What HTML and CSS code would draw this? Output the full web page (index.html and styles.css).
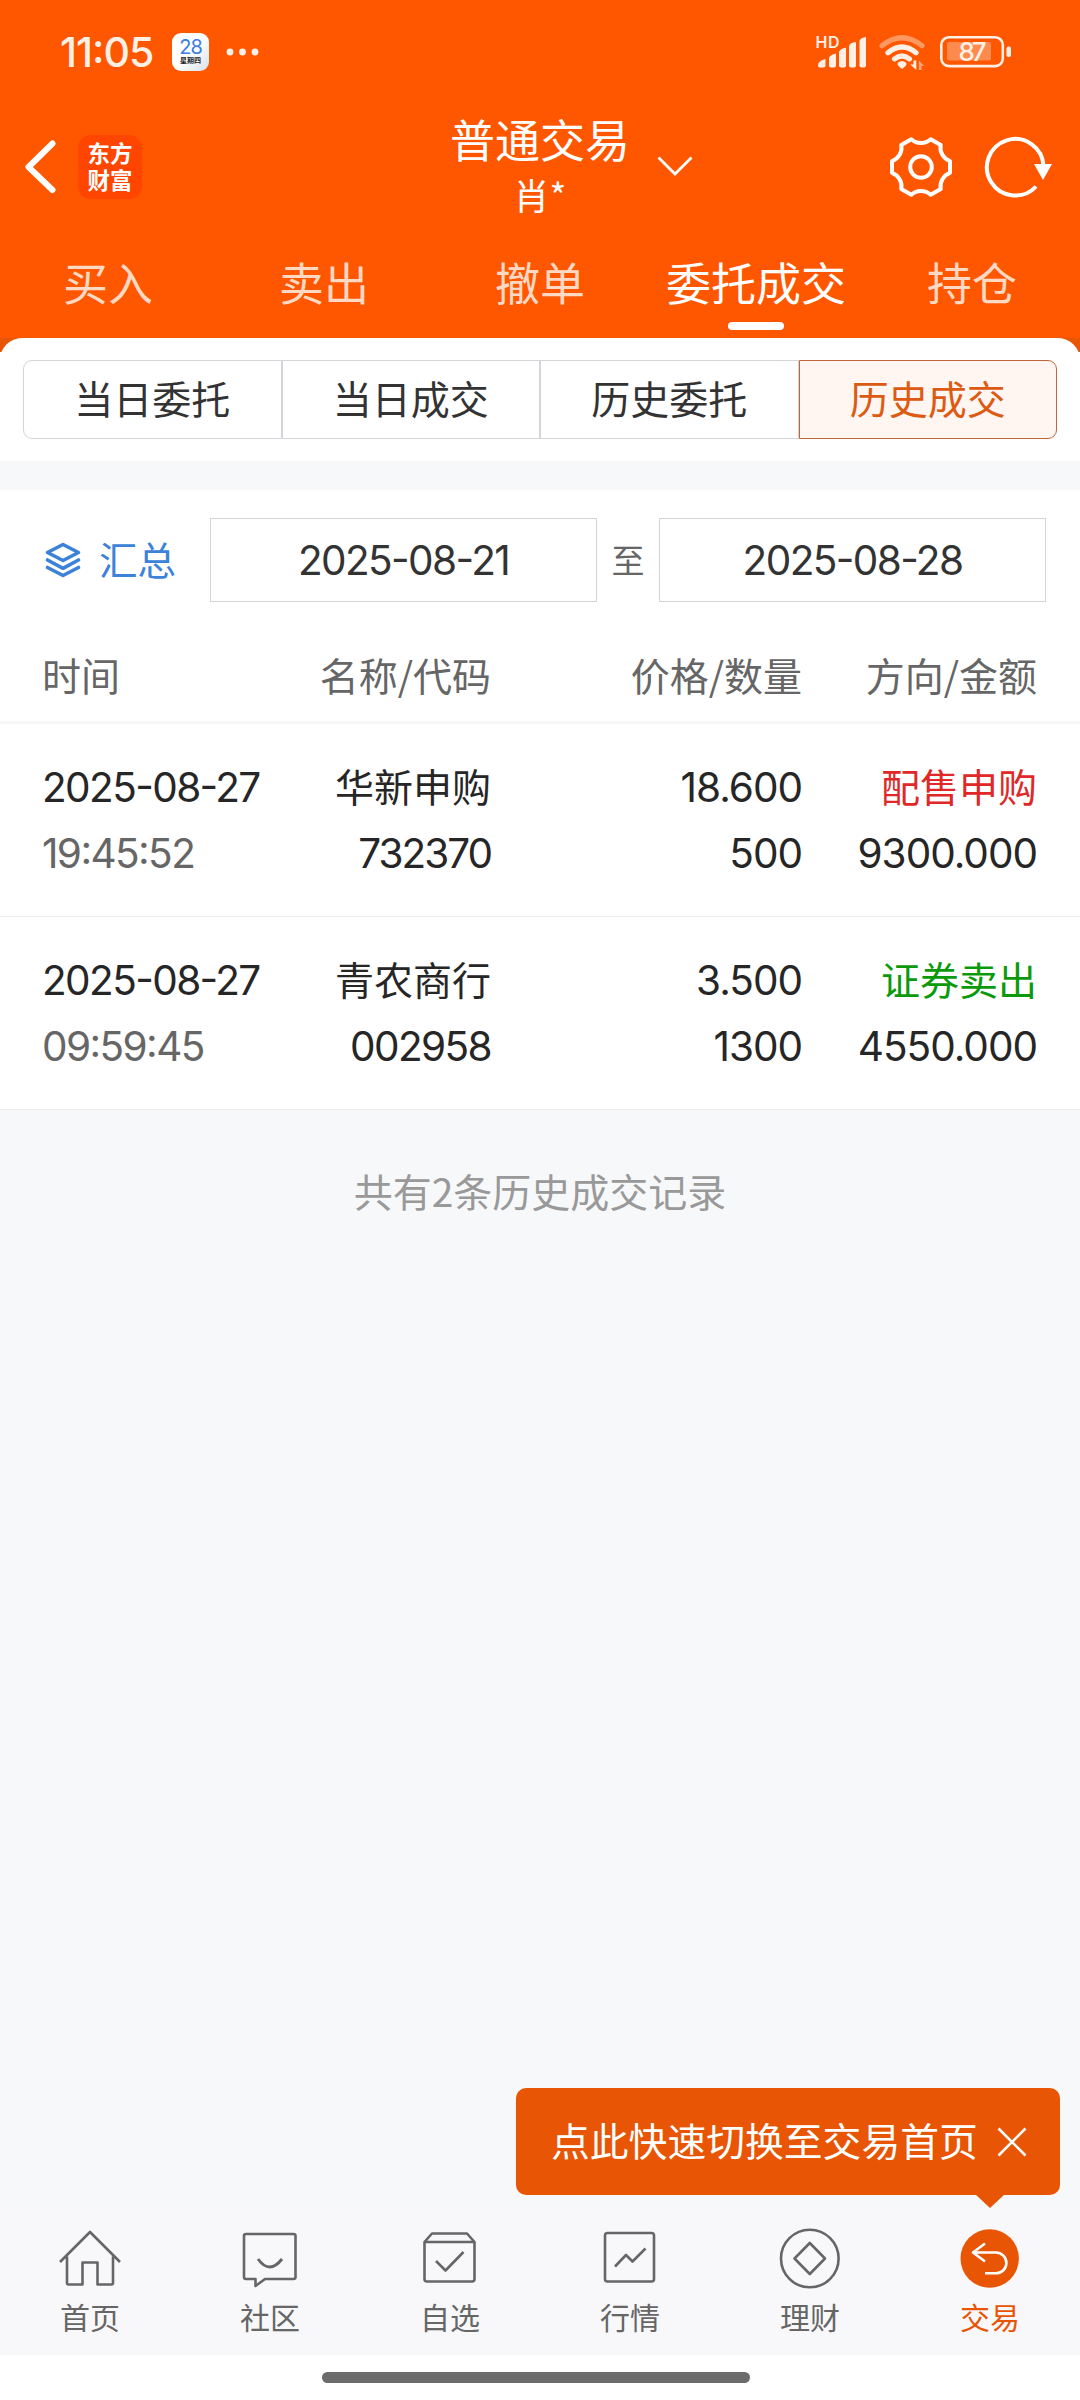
FILE: index.html
```html
<!DOCTYPE html>
<html lang="zh-CN">
<head>
<meta charset="utf-8">
<title>普通交易</title>
<link rel="stylesheet" href="styles.css">
</head>
<body>
<div class="app">
  <header class="header">
    <div class="status">
      <span class="clock">11:05</span>
      <span class="calendar"><b>28</b><i>星期四</i></span>
      <svg class="dots" width="34" height="8" viewBox="0 0 34 8" fill="#fff0e6"><circle cx="4" cy="4" r="3.4"/><circle cx="16.5" cy="4" r="3.4"/><circle cx="29" cy="4" r="3.4"/></svg>
      <svg class="signals" width="200" height="40" viewBox="814 32 200 40">
        <text class="hd" x="815.5" y="47.500" textLength="24">HD</text>
        <g fill="#fff0e6">
          <path d="M818 65.500q0-5 7.500-6.500V65.500q0 2-2 2h-3.500q-2 0-2-2z"/>
          <path d="M829 65V58q1-3.500 7-4.500V65.500q0 2-2 2h-3q-2 0-2-2z"/>
          <path d="M839 65V52q1-3.500 7-4.200V65.500q0 2-2 2h-3q-2 0-2-2z"/>
          <path d="M849 65V46q1-3.500 7-4V65.500q0 2-2 2h-3q-2 0-2-2z"/>
          <path d="M859.500 65V41q1-3.500 6.500-4V65.500q0 2-2 2h-2.500q-2 0-2-2z"/>
          <path d="M902 69q-6-4-4-6.500q4-3 8 0q2 2.500-4 6.500z"/>
          <path d="M913.500 60.500h2.800v9.500l-6-5.500h3.200z"/>
          <path d="M918.800 70V60.500l5.500 5.500h-2.800v4z" opacity=".5"/>
        </g>
        <g fill="none" stroke="#fff0e6" stroke-width="5.200" stroke-linecap="round">
          <path d="M882 45.800q20-16 40 0" opacity=".42"/>
          <path d="M888 52.800q14-11.500 28 0"/>
          <path d="M894.500 59q7.500-6 15 0"/>
        </g>
        <rect x="941.300" y="37.300" width="61.500" height="28.800" rx="7.500" fill="none" stroke="#fff0e6" stroke-width="2.600"/>
        <rect x="947" y="42" width="44" height="18.500" rx="2" fill="#ff8a4d"/>
        <rect x="1006.500" y="46.500" width="4.500" height="10.500" rx="2" fill="#fff0e6"/>
        <text class="battery" x="958.500" y="61" textLength="28">87</text>
      </svg>
    </div>
    <div class="nav">
      <div class="nav-left">
        <svg width="32" height="54" viewBox="25 141 32 54"><path d="M52.500 144.500 28.500 168 52.500 191" fill="none" stroke="#fff" stroke-width="6" stroke-linecap="round" stroke-linejoin="round"/></svg>
        <span class="logo">东方财富</span>
      </div>
      <div class="nav-title">
        <div class="title">普通交易</div>
        <div class="account">肖*</div>
        <svg class="caret" width="38" height="22" viewBox="656 155 38 22"><path d="M658.500 157.500 675 174 691.500 157.500" fill="none" stroke="#fff" stroke-width="2.800"/></svg>
      </div>
      <div class="nav-right">
        <svg width="66" height="66" viewBox="-33 -33 66 66" fill="none" stroke="#fff" stroke-width="4" stroke-linejoin="round">
          <path d="M29 5.800A14.500 14.500 0 0 0 19.700 22L9.700 27.800A14.500 14.500 0 0 0-9.700 27.800L-19.700 22A14.500 14.500 0 0 0-29 5.800V-5.800A14.500 14.500 0 0 0-19.700-22L-9.700-27.800A14.500 14.500 0 0 0 9.700-27.800L19.700-22A14.500 14.500 0 0 0 29-5.800Z"/>
          <circle r="10.800"/>
        </svg>
        <svg width="72" height="66" viewBox="982 134 72 66"><path d="M1043.500 166A28.300 28.300 0 1 0 1036 186.500" fill="none" stroke="#fff" stroke-width="4"/><path d="M1034 164h18l-9 16z" fill="#fff"/></svg>
      </div>
    </div>
    <nav class="tabs">
      <span>买入</span><span>卖出</span><span>撤单</span><span class="on">委托成交</span><span>持仓</span>
    </nav>
  </header>

  <main class="content">
    <div class="corners"><div class="card-top">
      <div class="segments"><span>当日委托</span><span>当日成交</span><span>历史委托</span><span class="on">历史成交</span></div>
    </div></div>
    <section class="panel">
      <div class="filter">
        <span class="summary">
          <svg width="36" height="38" viewBox="45 541 36 38" fill="none" stroke="#3b82d8" stroke-width="3.600" stroke-linejoin="round" stroke-linecap="round"><path d="M63 544.500 78.500 552.500 63 560.500 47.500 552.500zM47.500 560 63 568.300 78.500 560M47.500 567.500 63 575.500 78.500 567.500"/></svg>
          <span>汇总</span>
        </span>
        <span class="date num">2025-08-21</span>
        <span class="to">至</span>
        <span class="date num">2025-08-28</span>
      </div>
      <div class="row head"><span>时间</span><span>名称/代码</span><span>价格/数量</span><span>方向/金额</span></div>
      <div class="row">
        <span class="num">2025-08-27</span><span>华新申购</span><span class="num wide">18.600</span><span class="buy">配售申购</span>
        <span class="num time">19:45:52</span><span class="num code">732370</span><span class="num wide">500</span><span class="num wide">9300.000</span>
      </div>
      <div class="row">
        <span class="num">2025-08-27</span><span>青农商行</span><span class="num wide">3.500</span><span class="sell">证券卖出</span>
        <span class="num time">09:59:45</span><span class="num">002958</span><span class="num wide">1300</span><span class="num wide">4550.000</span>
      </div>
    </section>
    <p class="total">共有2条历史成交记录</p>
  </main>

  <footer class="tabbar">
    <div class="tip"><span>点此快速切换至交易首页</span>
      <svg width="30" height="30" viewBox="0 0 30 30"><path d="M1.500 1.500 28.500 28.500M28.500 1.500 1.500 28.500" stroke="#fff" stroke-width="2.600"/></svg>
    </div>
    <a><svg viewBox="58 2226 64 64"><path d="M60 2262 90 2232 120 2262M67 2256.500V2283q0 1.500 1.500 1.500H82.500V2262.500H97.500V2284.500H111.500q1.500 0 1.500-1.500V2256.500"/></svg>首页</a>
    <a><svg viewBox="238 2226 64 64"><path d="M246 2234H293.500q2 0 2 2V2277q0 2-2 2H265L255.500 2286V2279H246q-2 0-2-2V2236q0-2 2-2z"/><path d="M258 2259q11.500 16 24 0" stroke-width="2.900"/></svg>社区</a>
    <a><svg viewBox="418 2226 64 64"><path d="M424.500 2242 432 2233.500H467L474.500 2242V2279q0 2.500-2.500 2.500H427q-2.500 0-2.500-2.500zM424.500 2242H474.500M436 2261 445.500 2270.500 463.500 2252"/></svg>自选</a>
    <a><svg viewBox="598 2226 64 64"><rect x="605" y="2233" width="49" height="48.500" rx="2.500"/><path d="M615 2266.500 626 2255 632.500 2261.500 645.500 2248.500"/></svg>行情</a>
    <a><svg viewBox="778 2226 64 64"><circle cx="809.800" cy="2258.500" r="28.800"/><path d="M809.800 2243 825 2258.500 809.800 2274 794.500 2258.500z"/></svg>理财</a>
    <a class="on"><svg viewBox="958 2226 64 64"><circle cx="989.700" cy="2258.500" r="29.200" fill="#e85504" stroke="none"/><path d="M985 2243.500 973 2252.500 985 2261.500M973 2252.500H996a10.300 10.300 0 0 1 0 20.800H985" stroke="#fff"/></svg>交易</a>
  </footer>
  <div class="gesture"><i></i></div>
</div>
</body>
</html>
```
FILE: styles.css
```css
* { box-sizing: border-box; }
body { margin: 0; }
.app {
  width: 1080px; height: 2400px; display: flex; flex-direction: column;
  background: #f7f8fa; color: #262626; overflow: hidden;
  font: 39px/1 "Noto Sans CJK SC", sans-serif; white-space: nowrap;
}
svg { display: block; flex: none; }
.num { font-family: Inter, "Noto Sans CJK SC", sans-serif; font-size: 40.5px; letter-spacing: -1.6px; font-feature-settings: "case"; }

.header { height: 338px; background: #ff5600; color: #fff; display: flex; flex-direction: column; }
.status { height: 104px; display: flex; align-items: center; padding: 0 66px 0 60px; }
.clock { width: 112px; font: 500 41px/1 Inter, sans-serif; letter-spacing: -1px; color: #fff0e6; font-feature-settings: "case"; }
.calendar {
  width: 37px; height: 38px; border-radius: 9px; background: linear-gradient(135deg, #fff 50%, #d5e0ea);
  display: flex; flex-direction: column; align-items: center; padding-top: 6px;
}
.calendar b { font: 400 20px/17px Inter, sans-serif; color: #3b7de0; letter-spacing: -1px; }
.calendar i { font-style: normal; font-weight: 700; font-size: 7px; line-height: 9px; color: #222; }
.dots { margin-left: 17px; }
.signals { margin-left: auto; }
.hd { font: 600 16px Inter, sans-serif; fill: #fff0e6; }
.battery { font: 500 26px Inter, sans-serif; fill: #fff0e6; }

.nav { height: 126px; display: grid; grid-template-columns: 1fr 180px 1fr; align-items: center; }
.nav-left { display: flex; align-items: center; gap: 21px; padding-left: 25px; }
.logo { width: 64px; height: 64px; border-radius: 13px; background: #ff4500; font-weight: 700; font-size: 22.500px; line-height: 27px; padding: 4px 8px 0 9.500px; white-space: normal; }
.nav-title { position: relative; text-align: center; }
.title { font-size: 45px; line-height: 56px; }
.account { font-size: 36px; line-height: 54px; padding-bottom: 2px; }
.caret { position: absolute; left: 206px; top: 44px; }
.nav-right { display: flex; justify-content: flex-end; gap: 28px; padding-right: 26px; }

.tabs { flex: 1; display: grid; grid-template-columns: repeat(5, 1fr); font-size: 45px; line-height: 103px; text-align: center; color: #ffd9c4; }
.tabs span { position: relative; }
.tabs .on { color: #fff; }
.tabs .on::after { content: ""; position: absolute; left: 80px; bottom: 8px; width: 56px; height: 8px; border-radius: 4px; background: #fff; }

.content { flex: 1; }
.corners { background: linear-gradient(#e85504 14px, #fff 14px); }
.card-top { height: 123px; background: #fff; border-radius: 22px 22px 0 0; padding: 22px 23px 0; }
.segments { height: 79px; display: grid; grid-template-columns: repeat(4, 1fr); line-height: 73px; text-align: center; color: #333; }
.segments span { border: 1px solid #d3d5d8; }
.segments span:first-child { border-radius: 9px 0 0 9px; }
.segments .on { border-color: #c0673a; background: #fff6f2; color: #dc5a12; border-radius: 0 9px 9px 0; }

.panel { margin-top: 29px; background: #fff; }
.filter { display: flex; align-items: center; height: 138px; padding: 2px 34px 0 45px; }
.summary { width: 165px; display: flex; align-items: center; gap: 18px; font-size: 38.500px; color: #3b82d8; }
.summary span { padding-bottom: 4px; }
.date { width: 387px; height: 84px; border: 1px solid #d3d5d8; line-height: 84px; text-align: center; color: #333; }
.to { width: 62px; text-align: center; font-size: 33px; color: #666; padding-bottom: 2px; }
.row {
  display: grid; grid-template-columns: 238px 211px 311px 235px; grid-auto-rows: 66px; padding: 30px 43px 30px 42px;
  line-height: 62px; height: 193px; text-align: right; border-bottom: 1px solid #ebecee;
}
.row .num { line-height: 68px; }
.row span:nth-child(4n + 1) { text-align: left; }
.row .wide { letter-spacing: -1px; }
.row .code { letter-spacing: -2px; }
.head { height: 96px; padding: 15px 43px 15px 42px; color: #666; border-bottom: 3px solid #f5f7f8; }
.time { color: #666; }
.buy { color: #e02828; }
.sell { color: #0c9a0c; }
.total { margin: 50px 0 0; line-height: 60px; text-align: center; color: #999; }

.tabbar { position: relative; height: 149px; background: #f8f8fa; display: grid; grid-template-columns: repeat(6, 1fr); }
.tabbar a { display: flex; flex-direction: column; align-items: center; padding-top: 20px; font-size: 30px; line-height: 52px; color: #666; }
.tabbar a svg { width: 64px; height: 64px; fill: none; stroke: #666; stroke-width: 2.600; stroke-linejoin: round; }
.tabbar .on { color: #e85504; }
.tip {
  position: absolute; right: 20px; bottom: 160px; width: 544px; height: 107px; border-radius: 10px;
  background: #e85504; color: #fff; display: flex; align-items: center; gap: 19px; padding-left: 35px; font-size: 38.800px;
}
.tip span { padding-bottom: 4px; }
.tip::after { content: ""; position: absolute; left: 459px; top: 106px; border: solid transparent; border-width: 14px 15px 0; border-top-color: #e85504; }
.gesture { height: 45px; background: #fff; display: flex; justify-content: center; padding-top: 17px; }
.gesture i { width: 428px; height: 11px; border-radius: 6px; background: #6b6b6b; margin-right: 8px; }
```
